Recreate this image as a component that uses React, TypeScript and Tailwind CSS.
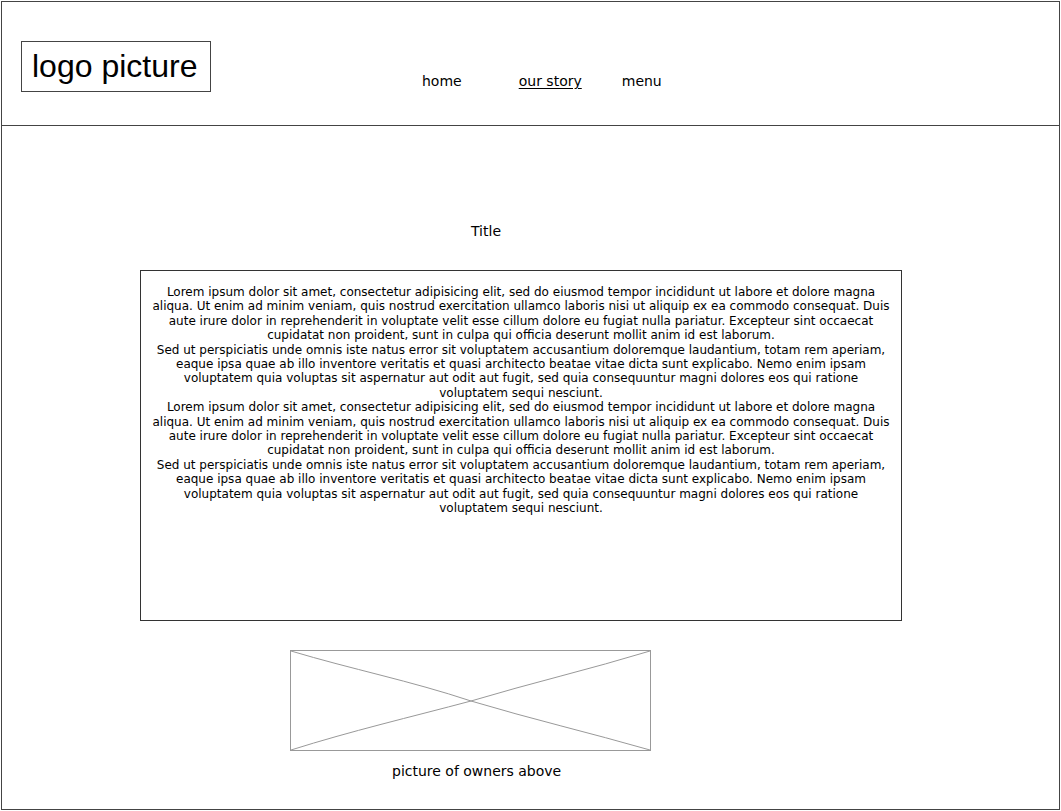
import React from 'react';

const LOREM =
  'Lorem ipsum dolor sit amet, consectetur adipisicing elit, sed do eiusmod tempor incididunt ut labore et dolore magna aliqua. Ut enim ad minim veniam, quis nostrud exercitation ullamco laboris nisi ut aliquip ex ea commodo consequat. Duis aute irure dolor in reprehenderit in voluptate velit esse cillum dolore eu fugiat nulla pariatur. Excepteur sint occaecat cupidatat non proident, sunt in culpa qui officia deserunt mollit anim id est laborum.';

const SED =
  'Sed ut perspiciatis unde omnis iste natus error sit voluptatem accusantium doloremque laudantium, totam rem aperiam, eaque ipsa quae ab illo inventore veritatis et quasi architecto beatae vitae dicta sunt explicabo. Nemo enim ipsam voluptatem quia voluptas sit aspernatur aut odit aut fugit, sed quia consequuntur magni dolores eos qui ratione voluptatem sequi nesciunt.';

// placeholder box with the crossed lines of a wireframe image
const ImagePlaceholder = () => (
  <div className="w-[361px] h-[101px] border border-[#999] relative">
    <svg className="absolute inset-0" width="359" height="99" viewBox="0 0 359 99">
      <path d="M0 0 C60 18 120 30 180 50 C240 68 300 82 359 99" fill="none" stroke="#999" strokeWidth="1" />
      <path d="M0 99 C60 80 120 66 180 50 C240 32 300 18 359 0" fill="none" stroke="#999" strokeWidth="1" />
    </svg>
  </div>
);

const App = () => {
  const paragraphs = [LOREM, SED, LOREM, SED];

  return (
    <div className="w-[1061px] h-[811px] bg-white p-[1px] font-['DejaVu_Sans',sans-serif] text-black">
      <div className="w-full h-full border border-[#444] flex flex-col">
        {/* header */}
        <header className="h-[124px] border-b border-[#444] flex items-start shrink-0">
          <div className="ml-[19px] mt-[39px] w-[190px] h-[51px] border border-[#444] flex items-center pl-[10px] pb-[2px] font-['Liberation_Sans',sans-serif] text-[32px] leading-none">
            logo picture
          </div>
          <nav className="flex items-center mt-[71px] text-[14px] leading-[17px]">
            <span className="ml-[211px]">home</span>
            <span className="ml-[57px] underline underline-offset-2">our story</span>
            <span className="ml-[40px]">menu</span>
          </nav>
        </header>

        {/* content */}
        <main className="flex flex-col">
          <div className="pt-[97px] pl-[469px] text-[14px] leading-[17px]">Title</div>

          <div className="mt-[30px] ml-[138px] w-[762px] h-[351px] border border-[#333] px-[9px] pt-[14px] text-[12px] leading-[14.4px] text-center">
            {paragraphs.map((p, i) => (
              <p key={i}>{p}</p>
            ))}
          </div>

          <div className="mt-[29px] ml-[288px]">
            <ImagePlaceholder />
          </div>

          <div className="mt-[12px] ml-[390px] text-[14px] leading-[17px]">picture of owners above</div>
        </main>
      </div>
    </div>
  );
};

export default App;
